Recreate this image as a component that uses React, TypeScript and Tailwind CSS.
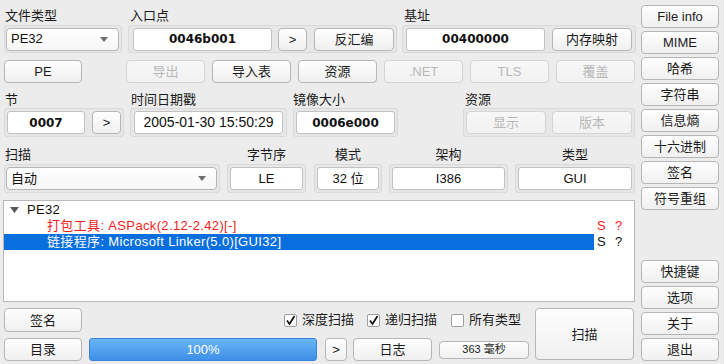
import React from "react";

const btnBase =
  "flex items-center justify-center shrink-0 rounded-[4px] border leading-none bg-linear-to-b";
const btnOn = "border-[#b6b6b6] from-[#fefefe] to-[#f0f0f0] text-[#1b1b1b]";
const btnOff = "border-[#d4d4d4] from-[#f7f7f7] to-[#f2f2f2] text-[#b8b8b8]";

function Btn({
  children,
  className = "",
  disabled = false,
  small = false,
}: {
  children: React.ReactNode;
  className?: string;
  disabled?: boolean;
  small?: boolean;
}) {
  return (
    <div
      className={`${btnBase} ${disabled ? btnOff : btnOn} ${small ? "text-[11px]" : "text-[13px]"} ${className}`}
    >
      {children}
    </div>
  );
}

function Frame({ children, className = "" }: { children: React.ReactNode; className?: string }) {
  return (
    <div
      className={`flex items-center shrink-0 rounded-[3px] border border-[#d9d9d9] bg-[#e7e7e7] ${className}`}
    >
      {children}
    </div>
  );
}

function Field({
  children,
  className = "",
  hex = false,
}: {
  children: React.ReactNode;
  className?: string;
  hex?: boolean;
}) {
  return (
    <div
      className={`flex items-center justify-center shrink-0 h-[23px] rounded-[3px] border border-[#c2c2c2] bg-white text-[#111] ${
        hex ? "font-['DejaVu_Sans',sans-serif] font-bold text-[12px]" : "text-[13px]"
      } ${className}`}
    >
      {children}
    </div>
  );
}

function Arrow() {
  return (
    <svg width="8" height="5" viewBox="0 0 8 5" className="shrink-0">
      <path d="M0 0 L8 0 L4 5 Z" fill="#6e6e6e" />
    </svg>
  );
}

function Combo({ text, className = "" }: { text: string; className?: string }) {
  return (
    <div
      className={`flex items-center justify-between shrink-0 h-[23px] rounded-[4px] border border-[#b6b6b6] bg-linear-to-b from-[#ffffff] to-[#f6f6f6] pl-[4px] pr-[10px] text-[13px] text-[#111] ${className}`}
    >
      <span>{text}</span>
      <Arrow />
    </div>
  );
}

function Check({ checked, label, className = "" }: { checked: boolean; label: string; className?: string }) {
  return (
    <div className={`flex items-center shrink-0 ${className}`}>
      <div className="w-[13px] h-[13px] bg-white border border-[#9e9e9e] rounded-[2px] flex items-center justify-center">
        {checked && (
          <svg width="11" height="11" viewBox="0 0 11 11">
            <path d="M2 5.5 L4.5 9 L9.5 1" stroke="#111" strokeWidth="1.7" fill="none" />
          </svg>
        )}
      </div>
      <span className="ml-[5px] text-[13px] text-[#1b1b1b]">{label}</span>
    </div>
  );
}

export default function App() {
  const rightTop = ["File info", "MIME", "哈希", "字符串", "信息熵", "十六进制", "签名", "符号重组"];
  const rightBottom = ["快捷键", "选项", "关于", "退出"];
  return (
    <div className="w-[724px] h-[364px] bg-[#ececec] flex overflow-hidden font-['Liberation_Sans','Noto_Sans_CJK_SC',sans-serif] text-[13px] text-[#1b1b1b]">
      {/* left column */}
      <div className="w-[638px] shrink-0 flex flex-col">
        {/* labels row 1 */}
        <div className="h-[25px] pt-[8px] leading-[16px] flex">
          <div className="w-[130px] pl-[5px]">文件类型</div>
          <div className="w-[274px]">入口点</div>
          <div>基址</div>
        </div>
        {/* row B */}
        <div className="h-[28px] flex">
          <Frame className="ml-[4px] w-[118px] h-[28px] pl-[1px]">
            <Combo text="PE32" className="w-[113px]" />
          </Frame>
          <Frame className="ml-[6px] w-[269px] h-[28px] pl-[4px]">
            <Field hex className="w-[139px]">0046b001</Field>
            <Btn className="ml-[6px] w-[29px] h-[23px]">&gt;</Btn>
            <Btn className="ml-[7px] w-[80px] h-[23px]">反汇编</Btn>
          </Frame>
          <Frame className="ml-[5px] w-[234px] h-[28px] pl-[3px]">
            <Field hex className="w-[139px]">00400000</Field>
            <Btn className="ml-[7px] w-[80px] h-[23px]">内存映射</Btn>
          </Frame>
        </div>
        {/* row C */}
        <div className="mt-[7px] h-[23px] flex">
          <Btn className="ml-[4px] w-[78px] h-[23px]">PE</Btn>
          <Btn disabled className="ml-[44px] w-[79px] h-[23px]">导出</Btn>
          <Btn className="ml-[7px] w-[79px] h-[23px]">导入表</Btn>
          <Btn className="ml-[7px] w-[79px] h-[23px]">资源</Btn>
          <Btn disabled className="ml-[7px] w-[79px] h-[23px]">.NET</Btn>
          <Btn disabled className="ml-[7px] w-[79px] h-[23px]">TLS</Btn>
          <Btn disabled className="ml-[7px] w-[79px] h-[23px]">覆盖</Btn>
        </div>
        {/* labels row D */}
        <div className="h-[25px] pt-[9px] leading-[16px] flex">
          <div className="w-[131px] pl-[5px]">节</div>
          <div className="w-[162px]">时间日期戳</div>
          <div className="w-[172px]">镜像大小</div>
          <div>资源</div>
        </div>
        {/* row E */}
        <div className="h-[29px] flex">
          <Frame className="ml-[4px] w-[120px] h-[29px] pl-[2px]">
            <Field hex className="w-[78px]">0007</Field>
            <Btn className="ml-[7px] w-[29px] h-[23px]">&gt;</Btn>
          </Frame>
          <Frame className="ml-[6px] w-[157px] h-[29px] pl-[3px]">
            <Field className="w-[149px] text-[14px]">2005-01-30 15:50:29</Field>
          </Frame>
          <Frame className="ml-[6px] w-[105px] h-[29px] pl-[2px]">
            <Field hex className="w-[99px]">0006e000</Field>
          </Frame>
          <Frame className="ml-[65px] w-[172px] h-[29px] pl-[2px]">
            <Btn disabled className="w-[80px] h-[23px]">显示</Btn>
            <Btn disabled className="ml-[6px] w-[80px] h-[23px]">版本</Btn>
          </Frame>
        </div>
        {/* row F+G */}
        <div className="flex">
          <div className="ml-[4px] w-[216px] flex flex-col">
            <div className="h-[27px] pt-[10px] leading-[16px] pl-[1px]">扫描</div>
            <Frame className="w-[216px] h-[29px] pl-[1px]">
              <Combo text="自动" className="w-[211px]" />
            </Frame>
          </div>
          <div className="ml-[7px] w-[79px] flex flex-col">
            <div className="h-[27px] pt-[10px] leading-[16px] text-center">字节序</div>
            <Frame className="w-[79px] h-[29px] justify-center">
              <Field className="w-[73px]">LE</Field>
            </Frame>
          </div>
          <div className="ml-[8px] w-[68px] flex flex-col">
            <div className="h-[27px] pt-[10px] leading-[16px] text-center">模式</div>
            <Frame className="w-[68px] h-[29px] justify-center">
              <Field className="w-[62px]">32 位</Field>
            </Frame>
          </div>
          <div className="ml-[7px] w-[119px] flex flex-col">
            <div className="h-[27px] pt-[10px] leading-[16px] text-center">架构</div>
            <Frame className="w-[119px] h-[29px] justify-center">
              <Field className="w-[113px]">I386</Field>
            </Frame>
          </div>
          <div className="ml-[7px] w-[120px] flex flex-col">
            <div className="h-[27px] pt-[10px] leading-[16px] text-center">类型</div>
            <Frame className="w-[120px] h-[29px] justify-center">
              <Field className="w-[114px]">GUI</Field>
            </Frame>
          </div>
        </div>
        {/* tree */}
        <div className="mt-[7px] ml-[3px] w-[632px] h-[102px] bg-white border border-[#b8b8b8] pt-[1px] text-[13px] leading-[16px]">
          <div className="h-[16px] flex items-center">
            <svg width="9" height="6" viewBox="0 0 9 6" className="ml-[6px]">
              <path d="M0 0 L9 0 L4.5 6 Z" fill="#5a5a5a" />
            </svg>
            <span className="ml-[8px] text-[#111] tracking-[0.35px]">PE32</span>
          </div>
          <div className="h-[16px] flex items-center text-[#f01d1d]">
            <div className="w-[590px] pl-[43px] tracking-[0.35px]">打包工具: ASPack(2.12-2.42)[-]</div>
            <div className="w-[21px] pl-[3px]">S</div>
            <div>?</div>
          </div>
          <div className="h-[16px] flex items-center">
            <div className="w-[590px] h-[16px] pl-[43px] bg-[#0a6fde] text-white tracking-[0.35px]">
              链接程序: Microsoft Linker(5.0)[GUI32]
            </div>
            <div className="w-[21px] pl-[3px] text-[#111]">S</div>
            <div className="text-[#111]">?</div>
          </div>
        </div>
        {/* bottom rows */}
        <div className="mt-[6px] flex">
          <div className="w-[530px] flex flex-col">
            <div className="h-[24px] flex items-center">
              <Btn className="ml-[4px] w-[78px] h-[24px]">签名</Btn>
              <Check checked label="深度扫描" className="ml-[202px]" />
              <Check checked label="递归扫描" className="ml-[13px]" />
              <Check checked={false} label="所有类型" className="ml-[14px]" />
            </div>
            <div className="mt-[6px] h-[23px] flex items-center">
              <Btn className="ml-[4px] w-[78px] h-[23px]">目录</Btn>
              <div className="ml-[7px] w-[228px] h-[23px] rounded-[3px] border border-[#3a82d6] bg-linear-to-b from-[#6ab5f8] to-[#3d8fe8] flex items-center justify-center text-white text-[13px]">
                100%
              </div>
              <Btn className="ml-[8px] w-[22px] h-[23px]">&gt;</Btn>
              <Btn className="ml-[6px] w-[79px] h-[23px]">日志</Btn>
              <Btn small className="ml-[7px] w-[90px] h-[18px]">363 毫秒</Btn>
            </div>
          </div>
          <Btn className="ml-[5px] w-[99px] h-[52px]">扫描</Btn>
        </div>
      </div>
      {/* right column */}
      <div className="ml-[3px] w-[78px] shrink-0 flex flex-col pt-[5px] pb-[3px]">
        <div className="flex flex-col gap-[3px]">
          {rightTop.map((t) => (
            <Btn key={t} className="w-[78px] h-[23px]">
              {t}
            </Btn>
          ))}
        </div>
        <div className="mt-auto flex flex-col gap-[3px]">
          {rightBottom.map((t) => (
            <Btn key={t} className="w-[78px] h-[23px]">
              {t}
            </Btn>
          ))}
        </div>
      </div>
    </div>
  );
}
